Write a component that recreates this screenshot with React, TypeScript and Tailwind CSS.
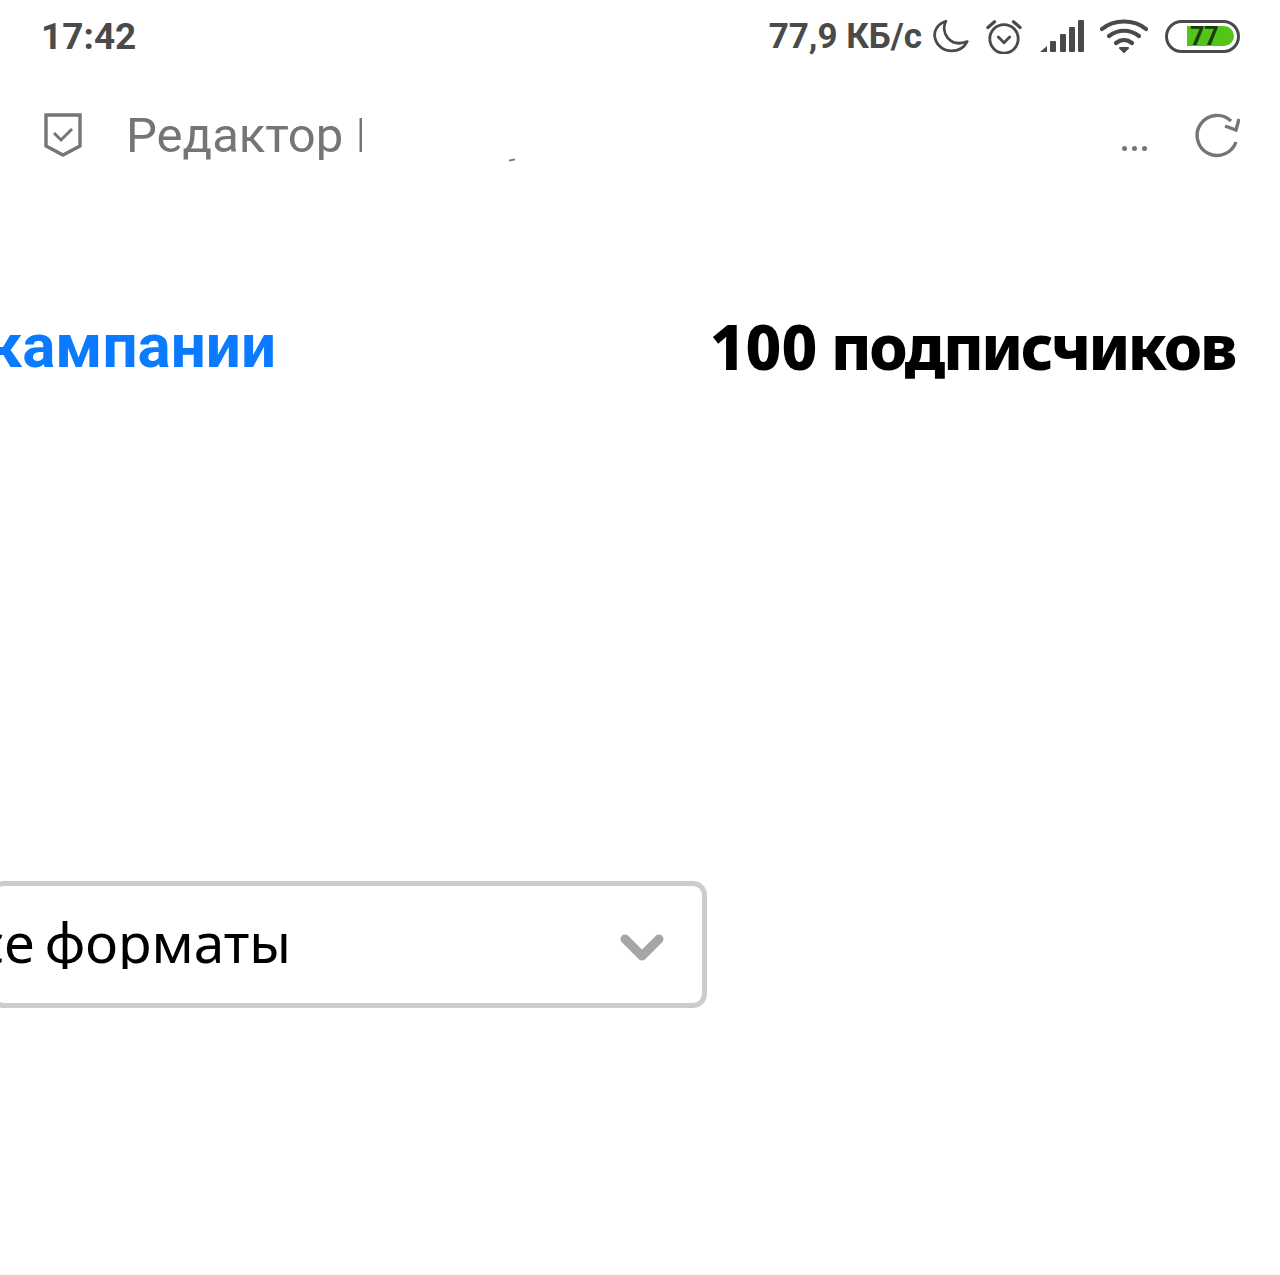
import React from 'react'

const roboto = { fontFamily: 'Roboto, sans-serif' }

const StatusIcons: React.FC = () => (
  <>
    {/* moon */}
    <svg width="37" height="36" viewBox="0 0 40 38" fill="none" stroke="#4a4a4a" strokeWidth="3" className="ml-[10px]">
      <path d="M15 3 C6 6 2 13 3 20 C5 30 13 35 21 35 C29 35 35 31 38 25 C30 28 22 27 17 21 C13 16 12 9 15 3 Z" strokeLinejoin="round" />
    </svg>
    {/* alarm */}
    <svg width="36" height="36" viewBox="0 0 38 38" fill="none" stroke="#4a4a4a" strokeWidth="3" strokeLinecap="round" className="ml-[17px]">
      <circle cx="19" cy="22" r="15" />
      <path d="M13 20 L19 26 L25 20" strokeLinejoin="round" />
      <path d="M2 10 L9 4 M36 10 L29 4" strokeWidth="3.4" />
    </svg>
    {/* signal */}
    <svg width="46" height="34" viewBox="0 0 46 34" fill="#4a4a4a" className="ml-[17px]">
      <path d="M1 33 L8 27 V33 Z" />
      <rect x="11" y="22" width="6" height="11" rx="1" />
      <rect x="21" y="15" width="6" height="18" rx="1" />
      <rect x="30" y="8" width="6" height="25" rx="1" />
      <rect x="39" y="1" width="6" height="32" rx="1" />
    </svg>
    {/* wifi */}
    <svg width="48" height="36" viewBox="0 0 48 36" fill="none" stroke="#4a4a4a" strokeWidth="4.2" strokeLinecap="round" className="ml-[15px]">
      <path d="M2 11 C14 1 34 1 46 11" />
      <path d="M9 18 C18 11 30 11 39 18" />
      <path d="M16 25 C21 21 27 21 32 25" />
      <path d="M20 30 L24 34 L28 30 Z" fill="#4a4a4a" strokeWidth="2" strokeLinejoin="round" />
    </svg>
    {/* battery */}
    <div className="ml-[17px] flex h-[33px] w-[75px] items-center rounded-full border-[3px] border-[#4a4a4a] pl-[19px] pr-[3px]">
      <div className="flex h-[20px] w-full items-center rounded-r-full bg-[#52c41a] pl-[3px] text-[25px] font-bold leading-none text-[#1a3a10]">
        77
      </div>
    </div>
  </>
)

export default function App() {
  return (
    <div className="h-[1275px] w-[1280px] overflow-hidden bg-white" style={roboto}>
      {/* status bar */}
      <div className="flex h-[72px] items-center justify-between pl-[41px] pr-[40px]">
        <span className="text-[37px] font-bold leading-none text-[#4a4a4a]">17:42</span>
        <div className="flex items-center">
          <span className="text-[35px] font-bold leading-none text-[#4a4a4a]">77,9 КБ/с</span>
          <StatusIcons />
        </div>
      </div>

      {/* browser address bar */}
      <div className="mt-[17px] flex h-[92px] items-center pl-[44px] pr-[40px]">
        <svg width="38" height="44" viewBox="0 0 38 44" fill="none" stroke="#757575" strokeWidth="3.4">
          <path d="M2 2 H36 V33 L19 42 L2 33 Z" />
          <path d="M10 20 L17 27 L28 16" strokeWidth="3" />
        </svg>
        <div className="ml-[44px] w-[236px] overflow-hidden whitespace-nowrap text-[49px] leading-none text-[#757575]">
          Редактор Р
        </div>
        <div className="ml-[147px] mt-[50px] h-[2px] w-[6px] -rotate-12 bg-[#757575]" />
        <span className="ml-auto mt-[26px] flex gap-[5px]">
          <i className="size-[5px] rounded-full bg-[#757575]" />
          <i className="size-[5px] rounded-full bg-[#757575]" />
          <i className="size-[5px] rounded-full bg-[#757575]" />
        </span>
        <svg width="46" height="46" viewBox="0 0 46 46" fill="none" stroke="#757575" strokeWidth="3.4" className="ml-[47px]">
          <path d="M42 30 A20 20 0 1 1 37 9" />
          <path d="M45 7 L42 18 L31 14" />
        </svg>
      </div>

      {/* heading row */}
      <div className="mt-[129px] flex items-center justify-between pr-[45px] leading-[72px] font-bold">
        <div className="w-[276px] overflow-hidden whitespace-nowrap text-[62px] text-[#0a7aff]" dir="rtl">кампании</div>
        <div className="text-[62px] font-extrabold tracking-[-2.4px] text-black" style={{ fontFamily: '"Noto Sans", sans-serif' }}>
          <span className="tracking-normal">100</span> подписчиков
        </div>
      </div>

      {/* format select */}
      <div className="-ml-[10px] mt-[499px] flex h-[127px] w-[717px] items-center justify-end rounded-[14px] border-[5px] border-[#cccccc] pr-[38px]">
        <div className="mb-[6px] mr-[329px] text-[55px] leading-none text-black [word-spacing:-4px]" style={{ fontFamily: '"Noto Sans", sans-serif' }}>
          <div className="w-[292px] overflow-hidden whitespace-nowrap" dir="rtl">все форматы</div>
        </div>
        <svg width="44" height="30" viewBox="0 0 44 30" fill="none" stroke="#a6a6a6" strokeWidth="9" strokeLinecap="round" strokeLinejoin="round" className="mt-[6px]">
          <path d="M5 6 L22 23 L39 6" />
        </svg>
      </div>
    </div>
  )
}
